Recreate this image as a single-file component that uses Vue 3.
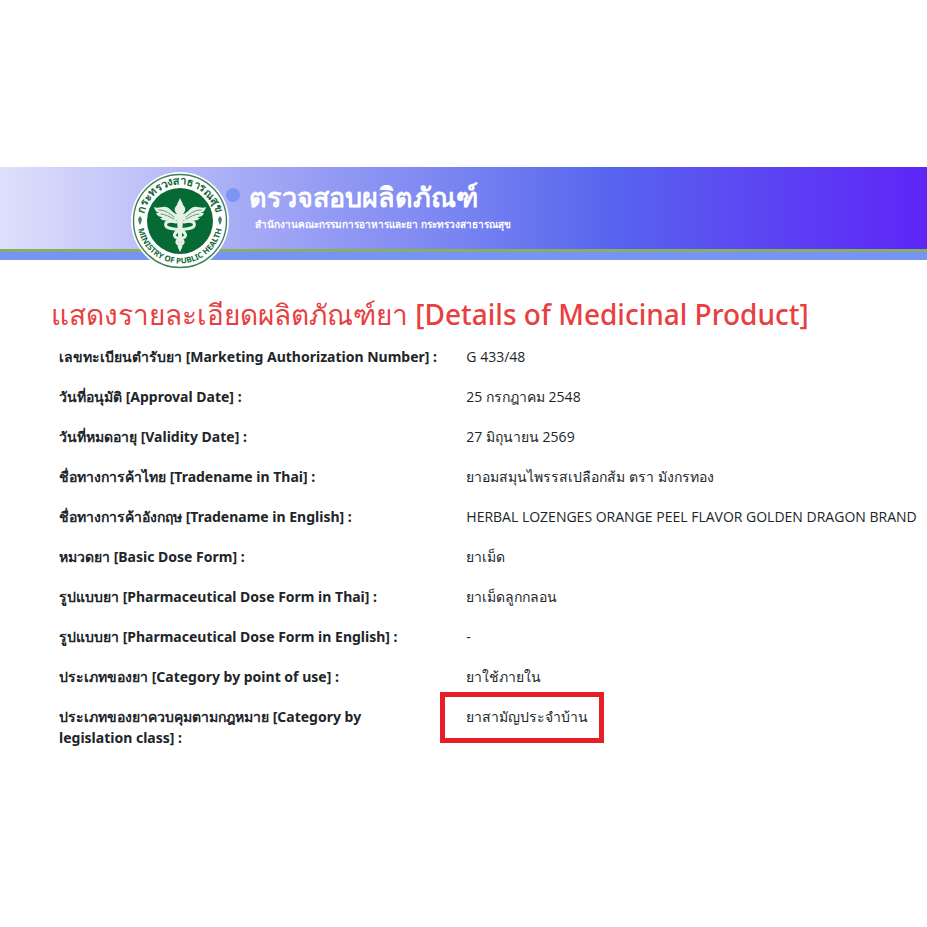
<template>
  <div class="page">
    <header class="banner">
      <svg class="seal" viewBox="0 0 98 98" role="img" aria-label="Ministry of Public Health">
        <defs>
          <path id="arc-top" d="M 12.5 49 A 36.5 36.5 0 0 1 85.5 49" />
          <path id="arc-bottom" d="M 6.5 49 A 42.5 42.5 0 0 0 91.5 49" />
        </defs>
        <circle cx="49" cy="49" r="49" fill="#fff" />
        <circle cx="49" cy="49" r="46.5" fill="none" stroke="#3f8058" stroke-width="1.4" />
        <circle cx="49" cy="49" r="33" fill="#066a35" />
        <text class="seal-thai">
          <textPath href="#arc-top" startOffset="50%" text-anchor="middle">กระทรวงสาธารณสุข</textPath>
        </text>
        <text class="seal-latin">
          <textPath href="#arc-bottom" startOffset="50%" text-anchor="middle">MINISTRY OF PUBLIC HEALTH</textPath>
        </text>
        <g fill="#3f8058">
          <path d="M9 44 L11 47 L10 51 L9 53 L8 51 L7 47 Z" />
          <path d="M89 44 L91 47 L90 51 L89 53 L88 51 L87 47 Z" />
        </g>
        <!-- winged staff -->
        <g fill="#e6f1e6">
          <path d="M46 42 C42 42 40 36 35 35 C31 34 27 37 23 35 C24 39 26 40 28 41 C27 41 26 41 25 41 C26 44 29 45 31 45 C31 46 30 46 29 46 C32 50 36 48 39 49 C42 49 44 49 47 48 Z" />
          <path d="M52 42 C56 42 58 36 63 35 C67 34 71 37 75 35 C74 39 72 40 70 41 C71 41 72 41 73 41 C72 44 69 45 67 45 C67 46 68 46 69 46 C66 50 62 48 59 49 C56 49 54 49 51 48 Z" />
          <path d="M46 42 C42 38 44 35 46 33 C46 31 48 29 49 26 C50 29 52 31 52 33 C54 35 56 38 52 42 L52 48 L50 78 L49 80 L48 78 L46 48 Z" />
        </g>
        <g fill="none" stroke="#e6f1e6" stroke-linecap="round">
          <path stroke-width="3" d="M45 50 C38 48 33 50 35 54 C37 58 45 56 49 58 C54 60 57 64 52 66 C47 68 44 69 47 72 C49 73 51 74 49 76" />
          <path stroke-width="3" d="M53 50 C60 48 65 50 63 54 C61 58 53 56 49 58 C44 60 41 64 46 66 C51 68 54 69 51 72 C49 73 47 74 49 76" />
          <path stroke="#066a35" stroke-width="0.6" d="M28 38 C34 38 38 41 43 45 M30 42 C34 42 39 45 43 47 M70 38 C64 38 60 41 55 45 M68 42 C64 42 59 45 55 47" />
        </g>
      </svg>
      <span class="dot"></span>
      <div class="banner-text">
        <p class="site-name">ตรวจสอบผลิตภัณฑ์</p>
        <p class="agency">สำนักงานคณะกรรมการอาหารและยา กระทรวงสาธารณสุข</p>
      </div>
    </header>

    <main>
      <h1>แสดงรายละเอียดผลิตภัณฑ์ยา [Details of Medicinal Product]</h1>
      <table>
        <tbody>
          <tr v-for="row in rows" :key="row.label">
            <th scope="row">{{ row.label }} :</th>
            <td><span :class="{ marked: row.marked }">{{ row.value }}</span></td>
          </tr>
        </tbody>
      </table>
    </main>
  </div>
</template>

<script setup>
const rows = [
  { label: 'เลขทะเบียนตำรับยา [Marketing Authorization Number]', value: 'G 433/48' },
  { label: 'วันที่อนุมัติ [Approval Date]', value: '25 กรกฎาคม 2548' },
  { label: 'วันที่หมดอายุ [Validity Date]', value: '27 มิถุนายน 2569' },
  { label: 'ชื่อทางการค้าไทย [Tradename in Thai]', value: 'ยาอมสมุนไพรรสเปลือกส้ม ตรา มังกรทอง' },
  { label: 'ชื่อทางการค้าอังกฤษ [Tradename in English]', value: 'HERBAL LOZENGES ORANGE PEEL FLAVOR GOLDEN DRAGON BRAND' },
  { label: 'หมวดยา [Basic Dose Form]', value: 'ยาเม็ด' },
  { label: 'รูปแบบยา [Pharmaceutical Dose Form in Thai]', value: 'ยาเม็ดลูกกลอน' },
  { label: 'รูปแบบยา [Pharmaceutical Dose Form in English]', value: '-' },
  { label: 'ประเภทของยา [Category by point of use]', value: 'ยาใช้ภายใน' },
  { label: 'ประเภทของยาควบคุมตามกฎหมาย [Category by legislation\u00a0class]', value: 'ยาสามัญประจำบ้าน', marked: true },
]
</script>

<style>
body {
  background: #fff;
}
</style>

<style scoped>
.page {
  padding-top: 167px;
  font-family: "Noto Sans", "Open Sans", sans-serif;
  color: #212529;
}

.banner {
  display: flex;
  height: 82px;
  padding-left: 131px;
  border-bottom: 3px solid #87ad68;
  box-shadow: 0 8px 0 #7794f3;
  background: linear-gradient(90deg, #dfe0fc 0%, #bfc2f8 15%, #a5a9f5 27%, #6f7cf0 54%, #5766ee 65%, #5b4bf2 79%, #5e25f7 100%);
}

.seal {
  flex: none;
  width: 98px;
  height: 98px;
  margin-top: 5px;
}

.seal-thai {
  font: bold 11px "Noto Sans", sans-serif;
  fill: #17683b;
}

.seal-latin {
  font: bold 8px "Noto Sans", sans-serif;
  fill: #17683b;
}

.dot {
  flex: none;
  width: 14px;
  height: 14px;
  margin: 21px 0 0 -3px;
  border-radius: 50%;
  background: #7a95f4;
}

.banner-text {
  margin-left: 9px;
  color: #fff;
  white-space: nowrap;
}

.banner-text p {
  margin: 0;
}

.site-name {
  padding-top: 12px;
  font-size: 27px;
  font-weight: 600;
  line-height: 36px;
}

.banner-text .agency {
  margin-left: 6px;
  font-size: 10px;
  font-weight: 600;
  line-height: 18px;
}

main {
  padding: 45px 0 0 51px;
}

h1 {
  margin: 0;
  font-size: 28px;
  font-weight: 500;
  line-height: 34px;
  color: #e8403f;
}

table {
  width: 100%;
  margin-top: 6px;
  border-collapse: collapse;
  font-size: 14px;
  line-height: 21px;
}

th,
td {
  padding: 9px 8px 10px;
  text-align: left;
  vertical-align: top;
}

th {
  width: 46.5%;
  font-weight: 700;
}

td {
  font-family: "Open Sans", sans-serif;
}

.marked {
  position: relative;
}

/* red frame round the legal category */
.marked::after {
  content: "";
  position: absolute;
  inset: -15px -16px -17px -26px;
  border: 5px solid #e61e26;
}
</style>
